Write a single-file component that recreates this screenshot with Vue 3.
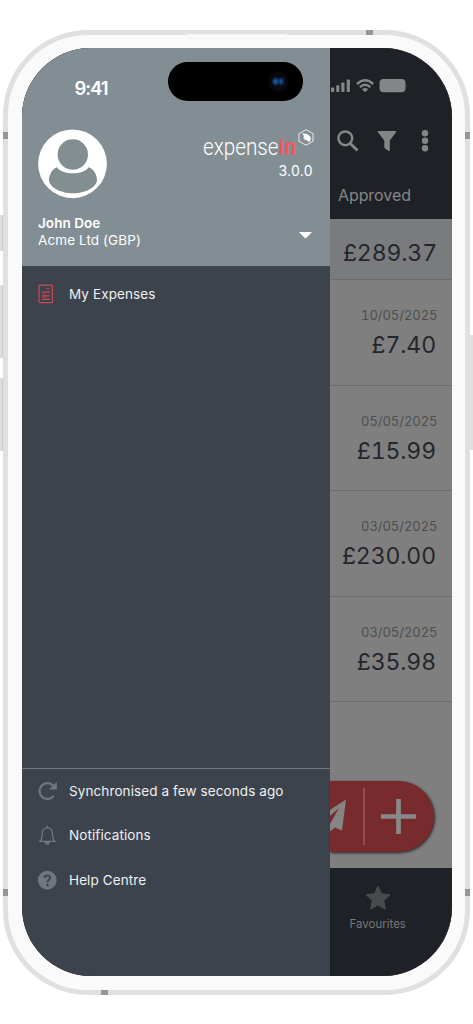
<script setup>
const expenses = [
  { date: '10/05/2025', amount: '£7.40' },
  { date: '05/05/2025', amount: '£15.99' },
  { date: '03/05/2025', amount: '£230.00' },
  { date: '03/05/2025', amount: '£35.98' },
]
</script>

<template>
  <div class="stage">
    <i class="key k1"></i><i class="key k2"></i><i class="key k3"></i><i class="key k4"></i>
    <div class="phone">
      <i class="band b1"></i><i class="band b2"></i><i class="band b3"></i>
      <i class="band b4"></i><i class="band b5"></i><i class="band b6"></i>
      <i class="speaker"></i>
      <div class="screen">
        <aside class="drawer">
          <header class="profile">
            <div class="time">9:41</div>
            <div class="identity">
              <svg class="avatar" width="70" height="70" viewBox="0 0 70 70">
                <circle cx="34.500" cy="34.800" r="34.400" fill="#fff" />
                <circle cx="34.800" cy="25.500" r="15.200" fill="#828e90" />
                <path d="M19 38.300C24 46.300 46 46.300 50.500 38.300C55.500 39.300 59 46 59 51C59 58 47.500 64.300 35 64.300S11 58 11 51C11 46 14.500 39.300 19 38.300Z" fill="#828e90" />
              </svg>
              <div class="brand">
                <div class="logo"><span class="word">expense<b>in</b></span>
                  <svg class="badge" width="16" height="17" viewBox="0 0 16 17">
                    <path d="M8 .7L15 4.600V12.300L8 16.200L1 12.300V4.600Z" fill="none" stroke="#f4f6f6" stroke-width=".9" />
                    <path d="M4.200 4.300L9.200 4.900L12.800 8.100L12.300 9.200L13 10.200L11.100 13.300L8.500 11L5.300 10.500L6.900 9.300L4.800 8.500L6.200 7.500Z" fill="#fff" />
                  </svg>
                </div>
                <div class="version">3.0.0</div>
              </div>
            </div>
            <div class="account">
              <div><div class="name">John Doe</div><div class="company">Acme Ltd (GBP)</div></div>
              <svg class="caret" width="13" height="7" viewBox="0 0 13 7"><path d="M0 0H13L7.500 5.800Q6.500 6.800 5.500 5.800Z" fill="#fff" /></svg>
            </div>
          </header>
          <nav class="main-nav">
            <a class="item">
              <svg width="22" height="22" viewBox="0 0 22 22" fill="none" stroke="#c94b50">
                <rect x="2" y="2.200" width="13.400" height="17.500" rx="1" stroke-width="1.200" />
                <path d="M9.300 5.900H12.300M4.800 9.200H12.800M4.800 12.800H12.800M4.800 16.400H12.800" stroke-width="1.200" />
                <path d="M4.800 11.100H9.300M4.800 14.600H10.300" stroke-width=".5" />
              </svg><span>My Expenses</span>
            </a>
          </nav>
          <nav class="foot-nav">
            <a class="item">
              <svg width="22" height="22" viewBox="0 0 22 22">
                <path d="M16.700 15.800A7.900 7.900 0 1 1 16 5.400" fill="none" stroke="#707680" stroke-width="2.200" />
                <path d="M19.900 1.700V9.400H11.900Z" fill="#707680" />
              </svg><span>Synchronised a few seconds ago</span>
            </a>
            <a class="item">
              <svg width="22" height="22" viewBox="0 0 22 22">
                <path d="M2.900 17.300C4.800 15.600 5.200 13.500 5.200 9.500C5.200 6 7.300 3.800 10.300 3.800S15.400 6 15.400 9.500C15.400 13.500 15.900 15.600 17.800 17.300Z" fill="none" stroke="#707680" stroke-width="1.300" />
                <path d="M9.200 3.700V2.900A1.100 1.100 0 0 1 11.400 2.900V3.700ZM7.700 18H12.900A2.600 2.600 0 0 1 7.700 18Z" fill="#707680" />
              </svg><span>Notifications</span>
            </a>
            <a class="item">
              <svg width="22" height="22" viewBox="0 0 22 22">
                <circle cx="10.300" cy="11.200" r="9.400" fill="#707680" />
                <path d="M7.500 8.900C7.600 5.700 13.100 5.700 13.100 8.900C13.100 11 10.400 11.100 10.400 13.400" fill="none" stroke="#3d434d" stroke-width="1.900" />
                <circle cx="10.400" cy="16" r="1.300" fill="#3d434d" />
              </svg><span>Help Centre</span>
            </a>
          </nav>
        </aside>

        <main class="app">
          <div class="topbar">
            <svg class="status" width="78" height="15" viewBox="0 0 78 15" fill="#858688">
              <rect x="1" y="8.500" width="3.200" height="4.500" rx=".8" /><rect x="6.200" y="6.200" width="3.200" height="6.800" rx=".8" />
              <rect x="11.300" y="3.500" width="3.200" height="9.500" rx=".8" /><rect x="16.700" y=".5" width="3.200" height="12.500" rx=".8" />
              <g fill="none" stroke="#858688" stroke-width="2.400"><path d="M27 5Q35.100-2.400 43.200 5" /><path d="M29.900 8.200Q35.100 3.500 40.300 8.200" /></g>
              <path d="M32 10.200Q35.100 7.600 38.200 10.200L35.100 13.200Z" />
              <rect x="49.500" y="0" width="26" height="13.300" rx="4" /><path d="M76.500 4.500Q78 6.500 76.500 8.800Z" opacity=".4" />
            </svg>
            <div class="tools">
              <svg width="22" height="22" viewBox="0 0 22 22" fill="none" stroke="#858585">
                <circle cx="8.300" cy="8.300" r="6.900" stroke-width="2.500" /><path d="M13.300 13.500L20.500 20.500" stroke-width="3" />
              </svg>
              <svg width="20" height="22" viewBox="0 0 20 22"><path d="M1.500 1H18.500Q19.800 1.200 19 2.300L12.800 10.500V20.300Q12.700 21.500 11.600 20.900L8.100 18.400Q7.300 17.800 7.300 16.700V10.500L1 2.300Q.2 1.200 1.500 1Z" fill="#858585" /></svg>
              <svg class="dots" width="8" height="22" viewBox="0 0 8 22" fill="#858585"><circle cx="4" cy="3.300" r="3.200" /><circle cx="4" cy="10.800" r="3.200" /><circle cx="4" cy="18.200" r="3.200" /></svg>
            </div>
            <div class="tab">Approved</div>
          </div>
          <div class="summary">£289.37</div>
          <div v-for="(e, i) in expenses" :key="i" class="row">
            <div class="date">{{ e.date }}</div>
            <div class="amount">{{ e.amount }}</div>
          </div>
          <div class="actions">
            <div class="fab">
              <svg width="104" height="71" viewBox="0 0 104 71">
                <path d="M0 29L16 18.500L12 49.500L5 46.500L0 50.500V43L9 27L0 35Z" fill="#858585" />
                <path d="M34 7V64" stroke="#9e6364" stroke-width="1.300" />
                <path d="M68.500 18V53M51 35.500H86" stroke="#898989" stroke-width="4.700" />
              </svg>
            </div>
          </div>
          <footer class="tabbar">
            <svg width="26" height="26" viewBox="0 0 26 26"><path d="M13 1L16.500 8.700L25 9.700L18.800 15.600L20.500 24.200L13 20L5.500 24.200L7.200 15.600L1 9.700L9.500 8.700Z" fill="#474b4d" stroke="#474b4d" stroke-linejoin="round" /></svg>
            <span>Favourites</span>
          </footer>
        </main>
        <div class="island"><i></i></div>
      </div>
    </div>
  </div>
</template>

<style>
body { margin: 0; background: #fff; }
</style>

<style scoped>
* { box-sizing: border-box; }
.stage { position: relative; width: 473px; height: 1024px; padding: 29.500px 3px; overflow: hidden; background: #fff; font-family: Inter, "Liberation Sans", sans-serif; }
.key { position: absolute; background: #dfdfdf; border-radius: 2px; }
.k1, .k2, .k3 { left: -1px; width: 5px; border-right: 2px solid #c9c9c9; }
.k1 { top: 215px; height: 36px; }
.k2 { top: 285px; height: 73px; }
.k3 { top: 377.500px; height: 73px; }
.k4 { left: 469px; width: 5px; top: 335px; height: 115px; }
.phone { position: relative; width: 467px; height: 965px; padding: 13.500px 13.500px; border: 5px solid #e0e0e0; border-radius: 85px; background: #fafafa; }
.band { position: absolute; background: #969696; }
.b1 { left: -5px; top: 97.500px; width: 5px; height: 7px; }
.b2 { right: -5px; top: 97.500px; width: 5px; height: 7px; }
.b3 { left: -5px; top: 854.500px; width: 5px; height: 7px; }
.b4 { right: -5px; top: 854.500px; width: 5px; height: 7px; }
.b5 { left: 358px; top: -5px; width: 7px; height: 5px; }
.b6 { left: 93px; bottom: -5px; width: 7px; height: 5px; }
.speaker { position: absolute; left: 178px; top: -1px; width: 102px; height: 5px; border: 1px solid #f3f3f3; border-radius: 0 0 4px 4px; }
.screen { position: relative; display: flex; width: 430px; height: 927.500px; overflow: hidden; border-radius: 69px; background: #1e2126; }
.drawer { display: flex; flex-direction: column; width: 308.400px; flex: none; background: #3d434d; color: #eef0f1; }
.profile { height: 218px; background: #828e94; color: #fff; }
.time { height: 80.500px; padding: 28.500px 0 0 53px; font-size: 18.500px; line-height: 23px; font-weight: 600; letter-spacing: -1.100px; }
.identity { display: flex; justify-content: space-between; padding: 0 16px 0 16px; }
.avatar { display: block; }
.brand { text-align: right; }
.logo { display: flex; height: 32px; width: 111px; }
.word { display: block; width: 95px; padding-top: 4px; font-family: Roboto, sans-serif; font-size: 23.500px; line-height: 29px; font-weight: 300; transform: scaleX(.88); transform-origin: left; white-space: nowrap; }
.word b { font-weight: 500; color: #f4565b; letter-spacing: .9px; }
.badge { flex: none; }
.version { margin-top: 1px; padding-right: 1px; font-size: 14px; line-height: 18px; letter-spacing: .3px; }
.account { display: flex; justify-content: space-between; align-items: flex-end; padding: 15.500px 18px 0 16.500px; }
.name { font-size: 13.500px; line-height: 18px; font-weight: 600; letter-spacing: .05px; }
.company { font-size: 13.500px; line-height: 17px; letter-spacing: .1px; }
.caret { display: block; margin-bottom: 10px; }
.main-nav { flex: 1; padding-top: 5.500px; }
.foot-nav { height: 208px; padding-top: .8px; border-top: 1px solid #707984; }
.item { display: flex; align-items: center; height: 44.100px; padding-left: 15px; gap: 10.500px; font-size: 13.500px; letter-spacing: .1px; white-space: nowrap; }
.app { flex: 1; min-width: 0; display: flex; flex-direction: column; background: #7f7f7f; }
.topbar { height: 171px; background: #1e2126; padding-top: 31px; }
.status { display: block; }
.tools { display: flex; align-items: center; height: 22px; margin-top: 35.500px; padding-left: 7px; gap: 18px; }
.dots { margin-left: 6px; }
.tab { margin-top: 30px; padding-left: 8px; color: #858688; font-size: 16px; line-height: 26px; letter-spacing: -.05px; }
.summary { height: 61px; padding: 20px 14.500px 0 0; border-bottom: 1.500px solid #6b6c6d; background: #7a7b7d; text-align: right; font-size: 23px; line-height: 28px; letter-spacing: -.1px; font-variant-numeric: tabular-nums; color: #23272d; }
.row { height: 105.500px; padding: 26px 14px 0 0; border-bottom: 1.500px solid #6b6c6d; text-align: right; white-space: nowrap; font-variant-numeric: tabular-nums; }
.date { color: #4d4f51; font-size: 13px; line-height: 18px; letter-spacing: -.03px; }
.amount { margin: 6px 1.500px 0 0; color: #23272d; font-size: 23px; line-height: 30px; letter-spacing: -.1px; }
.actions { flex: 1; padding-top: 79px; }
.fab { width: 104px; height: 71px; border-radius: 0 36px 36px 0; background: #782b2d; box-shadow: 1px 1px 3px rgba(0, 0, 0, .7); }
.fab svg { display: block; }
.tabbar { display: flex; flex-direction: column; align-items: center; height: 107.500px; padding: 17px 26px 0 0; background: #1e2126; color: #77797b; font-size: 11.500px; line-height: 20px; letter-spacing: 0; }
.tabbar svg { margin-bottom: 2.500px; }
.island { position: absolute; left: 146.500px; top: 13.500px; width: 135px; height: 39px; border-radius: 20px; background: #000; }
.island i { position: absolute; left: 100px; top: 10px; width: 20px; height: 20px; border-radius: 50%; background: radial-gradient(ellipse 4px 5px at 7.500px 9.500px, #1f66bd, transparent), radial-gradient(ellipse 4px 5px at 13px 9.500px, #1b55a6, transparent), #090a11; }
</style>
